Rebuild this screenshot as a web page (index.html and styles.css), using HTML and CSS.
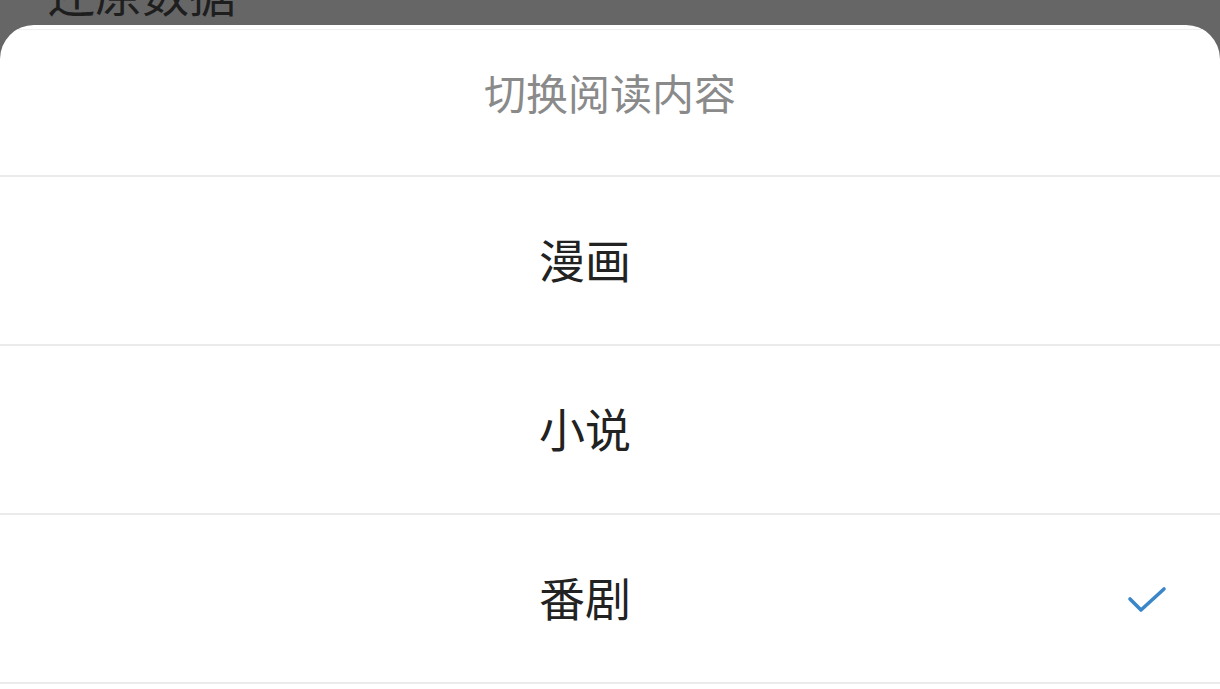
FILE: index.html
```html
<!DOCTYPE html>
<html lang="zh-CN">
<head>
<meta charset="utf-8">
<title>切换阅读内容</title>
<link rel="stylesheet" href="styles.css">
</head>
<body>
<div class="behind">
  <div class="behind-text">还原数据</div>
</div>
<div class="sheet">
  <div class="sheet-header">切换阅读内容</div>
  <div class="divider"></div>
  <div class="option">漫画</div>
  <div class="divider"></div>
  <div class="option">小说</div>
  <div class="divider"></div>
  <div class="option selected">番剧
    <svg class="check" width="40" height="28" viewBox="0 0 40 28" aria-hidden="true">
      <polyline points="3,14 14,25 37,4" fill="none" stroke="#3a86c8" stroke-width="3.6" stroke-linecap="round" stroke-linejoin="round"/>
    </svg>
  </div>
  <div class="divider"></div>
</div>
</body>
</html>
```
FILE: styles.css
```css
html, body {
  margin: 0;
  padding: 0;
}
body {
  width: 1220px;
  height: 689px;
  overflow: hidden;
  background: #666666;
  font-family: "Noto Sans CJK SC", "Noto Sans", sans-serif;
}
.behind {
  height: 25px;
  overflow: hidden;
}
.behind-text {
  margin-top: -32px;
  padding-left: 48px;
  font-size: 47px;
  line-height: 1;
  color: #1e1e1e;
}
.sheet {
  background: #ffffff;
  border-radius: 34px 34px 0 0;
  padding-top: 4px;
  overflow: hidden;
  height: 660px;
}
.sheet-header {
  border-top: 1px solid #f0f0f0;
  padding: 41px 0 62px;
  font-size: 42px;
  line-height: 1;
  text-align: center;
  color: #8a8a8a;
}
.divider {
  height: 2px;
  background: #ebebeb;
}
.option {
  position: relative;
  box-sizing: border-box;
  height: 167px;
  display: flex;
  align-items: center;
  justify-content: center;
  padding: 0 50px 5px 0;
  font-size: 46px;
  line-height: 1;
  color: #222222;
}
.check {
  position: absolute;
  right: 53px;
  top: 50%;
  transform: translateY(-50%);
}
```
